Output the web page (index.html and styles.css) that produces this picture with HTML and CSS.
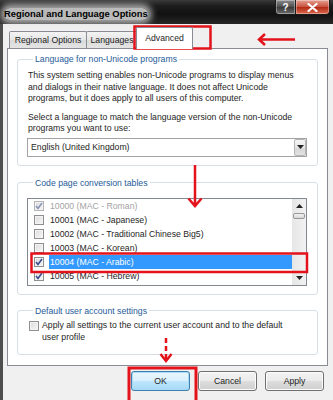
FILE: index.html
```html
<!DOCTYPE html>
<html>
<head>
<meta charset="utf-8">
<link rel="stylesheet" href="styles.css">
</head>
<body>
<div class="window">
  <div class="titlebar">
    <span class="title">Regional and Language Options</span>
    <div class="caption-buttons">
      <span class="cap-btn help">?</span>
      <span class="cap-btn close">
        <svg width="11" height="9" viewBox="0 0 11 9"><path d="M1.5 1 L9.5 8 M9.5 1 L1.5 8" stroke="#fff" stroke-width="2.2" stroke-linecap="round"/></svg>
      </span>
    </div>
  </div>
  <div class="frame">
    <div class="tabs">
      <div class="tab tab-regional">Regional Options</div>
      <div class="tab tab-languages">Languages</div>
      <div class="tab tab-advanced active">Advanced</div>
    </div>
    <div class="page">
      <fieldset class="group group-lang">
        <legend>Language for non-Unicode programs</legend>
        <p class="para">This system setting enables non-Unicode programs to display menus<br>and dialogs in their native language. It does not affect Unicode<br>programs, but it does apply to all users of this computer.</p>
        <p class="para para-select">Select a language to match the language version of the non-Unicode<br>programs you want to use:</p>
        <div class="combo">
          <span class="combo-text">English (United Kingdom)</span>
          <span class="combo-btn"><svg width="7" height="4" viewBox="0 0 7 4"><path d="M0 0 H7 L3.5 4 Z" fill="#222"/></svg></span>
        </div>
      </fieldset>

      <fieldset class="group group-code">
        <legend>Code page conversion tables</legend>
        <div class="listbox">
          <div class="rows">
            <div class="row disabled"><span class="cb checked"><svg width="8" height="8" viewBox="0 0 8 8"><path d="M1 4 L3 6.5 L7 1" stroke="#8a95b5" stroke-width="1.6" fill="none"/></svg></span><span class="row-text">10000 (MAC - Roman)</span></div>
            <div class="row"><span class="cb"></span><span class="row-text">10001 (MAC - Japanese)</span></div>
            <div class="row"><span class="cb"></span><span class="row-text">10002 (MAC - Traditional Chinese Big5)</span></div>
            <div class="row"><span class="cb"></span><span class="row-text">10003 (MAC - Korean)</span></div>
            <div class="row selected"><span class="cb checked"><svg width="8" height="8" viewBox="0 0 8 8"><path d="M1 4 L3 6.5 L7 1" stroke="#3b4f8f" stroke-width="1.6" fill="none"/></svg></span><span class="row-text">10004 (MAC - Arabic)</span></div>
            <div class="row"><span class="cb checked"><svg width="8" height="8" viewBox="0 0 8 8"><path d="M1 4 L3 6.5 L7 1" stroke="#3b4f8f" stroke-width="1.6" fill="none"/></svg></span><span class="row-text">10005 (MAC - Hebrew)</span></div>
          </div>
          <div class="scrollbar">
            <span class="sb-arrow"><svg width="7" height="4" viewBox="0 0 7 4"><path d="M0 4 H7 L3.5 0 Z" fill="#222"/></svg></span>
            <span class="sb-thumb"></span>
            <span class="sb-spacer"></span>
            <span class="sb-arrow"><svg width="7" height="4" viewBox="0 0 7 4"><path d="M0 0 H7 L3.5 4 Z" fill="#222"/></svg></span>
          </div>
        </div>
      </fieldset>

      <fieldset class="group group-default">
        <legend>Default user account settings</legend>
        <div class="check-row">
          <span class="cb"></span>
          <span class="check-text">Apply all settings to the current user account and to the default<br>user profile</span>
        </div>
      </fieldset>
    </div>
    <div class="buttons">
      <span class="btn default">OK</span>
      <span class="btn">Cancel</span>
      <span class="btn">Apply</span>
    </div>
  </div>

  <svg class="annotations" width="333" height="400" viewBox="0 0 333 400">
    <g fill="none" stroke="#e3121b" stroke-width="2.5">
      <rect x="134.5" y="26.5" width="76" height="22"/>
      <path d="M259 39.5 H295 M265 34 L259 39.5 L265 45"/>
      <path d="M195 165 V206 M188.5 198.5 L195 206 L201.5 198.5"/>
      <rect x="31.5" y="253.5" width="275.5" height="18.5"/>
      <path d="M166 338 V361" stroke-dasharray="5 3"/>
      <path d="M160.5 354 L166 361 L171.5 354"/>
      <rect x="129" y="368" width="67" height="34" stroke-width="3"/>
    </g>
  </svg>
</div>
</body>
</html>
```

FILE: styles.css
```css
* {
  box-sizing: border-box;
}

html, body {
  margin: 0;
  padding: 0;
}

body {
  width: 333px;
  height: 400px;
  overflow: hidden;
  font-family: "Liberation Sans", Arial, sans-serif;
  font-size: 8.7px;
  color: #1e1e1e;
  background: #f0f0f0;
}

.window {
  position: relative;
  width: 333px;
  height: 400px;
  display: flex;
  flex-direction: column;
  background: #f0f0f0;
}

/* Title bar */
.titlebar {
  height: 24px;
  flex: none;
  display: flex;
  align-items: flex-start;
  justify-content: space-between;
  background: linear-gradient(#3a3a3a 0px, #1c1c1c 6px, #111 14px, #262626 24px);
}

.title {
  margin: 8px 0 0 4px;
  font-size: 9.4px;
  font-weight: bold;
  line-height: 12px;
  color: #000;
  background: rgba(228, 228, 228, 0.8);
  box-shadow: 0 0 6px 4px rgba(228, 228, 228, 0.7);
  border-radius: 8px;
}

.caption-buttons {
  display: flex;
  margin-right: 3px;
}

.cap-btn {
  height: 15px;
  display: flex;
  align-items: center;
  justify-content: center;
  border: 1px solid #1a1a1a;
  border-top: none;
  box-shadow: inset 0 0 0 1px rgba(255, 255, 255, 0.35);
}

.help {
  width: 21px;
  border-radius: 0 0 0 4px;
  background: linear-gradient(#8d8d8d, #4c4c4c 50%, #3a3a3a 51%, #6b6b6b);
  color: #fff;
  font-weight: bold;
  font-size: 10px;
}

.close {
  width: 34px;
  border-radius: 0 0 4px 0;
  border-left: none;
  background: linear-gradient(#e7a193, #c7503c 50%, #b22a14 51%, #d96a4e);
}

/* Frame */
.frame {
  flex: 1;
  display: flex;
  flex-direction: column;
  border-left: 3px solid #4e4e4e;
  padding: 0 5px 0 4px;
}

.tabs {
  height: 24px;
  display: flex;
  align-items: flex-end;
  padding-left: 2px;
}

.tab {
  height: 17px;
  display: flex;
  align-items: center;
  justify-content: center;
  border: 1px solid #898c95;
  border-bottom: none;
  border-radius: 2px 2px 0 0;
  background: linear-gradient(#f3f3f3, #e6e6e6 50%, #dadada 51%, #e4e4e4);
  color: #1e1e1e;
  line-height: 12px;
  white-space: nowrap;
}

.tab-regional {
  width: 78px;
}

.tab-languages {
  width: 52px;
  margin-left: -1px;
}

.tab-advanced {
  width: 57px;
  margin-left: -2px;
}

.tab.active {
  height: 22px;
  margin-bottom: -1px;
  background: #fff;
  position: relative;
  z-index: 1;
  padding-bottom: 2px;
}

.page {
  border: 1px solid #898c95;
  background: #fff;
  padding: 4px 9px 10px 9px;
  display: flex;
  flex-direction: column;
}

/* Group boxes */
.group {
  margin: 0;
  border: 1px solid #d5dfe5;
  border-radius: 3px;
  padding: 0 10px 8px 10px;
  min-width: 0;
}

.group legend {
  margin-left: 5px;
  padding: 0 2px;
  line-height: 12px;
  color: #1f5b98;
}

.group-lang {
  padding-top: 5px;
}

.group-code {
  margin-top: 11px;
  padding-top: 9px;
}

.group-default {
  margin-top: 10px;
  padding-top: 3px;
  padding-bottom: 11px;
}

.para {
  margin: 0;
  line-height: 11.6px;
  white-space: nowrap;
}

.para-select {
  margin-top: 7px;
}

/* Combo box */
.combo {
  margin: 3px 0 0 -1px;
  height: 19px;
  border: 1px solid #a3a3a3;
  display: flex;
  align-items: center;
  justify-content: space-between;
  background: #fff;
}

.combo-text {
  padding-left: 3px;
}

.combo-btn {
  width: 12px;
  height: 17px;
  display: flex;
  align-items: center;
  justify-content: center;
  border: 1px solid #b5b5b5;
  border-radius: 2px;
  background: linear-gradient(#f5f5f5, #e6e6e6 50%, #d6d6d6 51%, #e2e2e2);
}

/* List box */
.listbox {
  margin-left: -1px;
  height: 88px;
  border: 1px solid #828790;
  display: flex;
  background: #fff;
}

.rows {
  flex: 1;
  display: flex;
  flex-direction: column;
}

.row {
  height: 14px;
  display: flex;
  align-items: center;
  padding-left: 6px;
}

.cb {
  width: 10px;
  height: 10px;
  flex: none;
  border: 1px solid #8e8f8f;
  background: linear-gradient(135deg, #dcdcdc, #f7f7f7);
  display: flex;
  align-items: center;
  justify-content: center;
  box-shadow: inset 0 0 0 1px #f4f4f4;
}

.row-text {
  margin-left: 5px;
  padding-left: 1px;
  flex: 1;
  height: 14px;
  line-height: 14px;
  white-space: nowrap;
}

.row.disabled .row-text {
  color: #a3a3a3;
}

.row.disabled .cb {
  border-color: #b5b5b5;
}

.row.selected .row-text {
  background: #3399ff;
  color: #fff;
}

.scrollbar {
  width: 14px;
  flex: none;
  display: flex;
  flex-direction: column;
  align-items: center;
  background: linear-gradient(90deg, #e6e6e6, #f2f2f2);
}

.sb-arrow {
  height: 14px;
  display: flex;
  align-items: center;
  justify-content: center;
}

.sb-thumb {
  width: 12px;
  height: 6px;
  border: 1px solid #979797;
  border-radius: 2px;
  background: linear-gradient(#f2f2f2, #d8d8d8);
}

.sb-spacer {
  flex: 1;
}

/* Default account checkbox */
.check-row {
  display: flex;
  align-items: flex-start;
  margin-left: 1px;
}

.check-row .cb {
  margin-top: 1px;
}

.check-text {
  margin-left: 3px;
  line-height: 11.6px;
  white-space: nowrap;
}

/* Buttons */
.buttons {
  display: flex;
  justify-content: flex-end;
  gap: 8px;
  margin-top: 5px;
  margin-right: 4px;
}

.btn {
  width: 59px;
  height: 20px;
  display: flex;
  align-items: center;
  justify-content: center;
  border: 1px solid #707070;
  border-radius: 3px;
  background: linear-gradient(#f2f2f2, #ebebeb 50%, #dddddd 51%, #cfcfcf);
  box-shadow: inset 0 0 0 1px #fcfcfc;
  color: #1e1e1e;
}

.btn.default {
  border-color: #3c7fb1;
  background: linear-gradient(#eaf6fd, #d9f0fc 50%, #bee6fd 51%, #a7d9f5);
  box-shadow: inset 0 0 0 1px #a9dbf6;
}

/* Annotation overlay */
.annotations {
  position: absolute;
  left: 0;
  top: 0;
  pointer-events: none;
}
```
